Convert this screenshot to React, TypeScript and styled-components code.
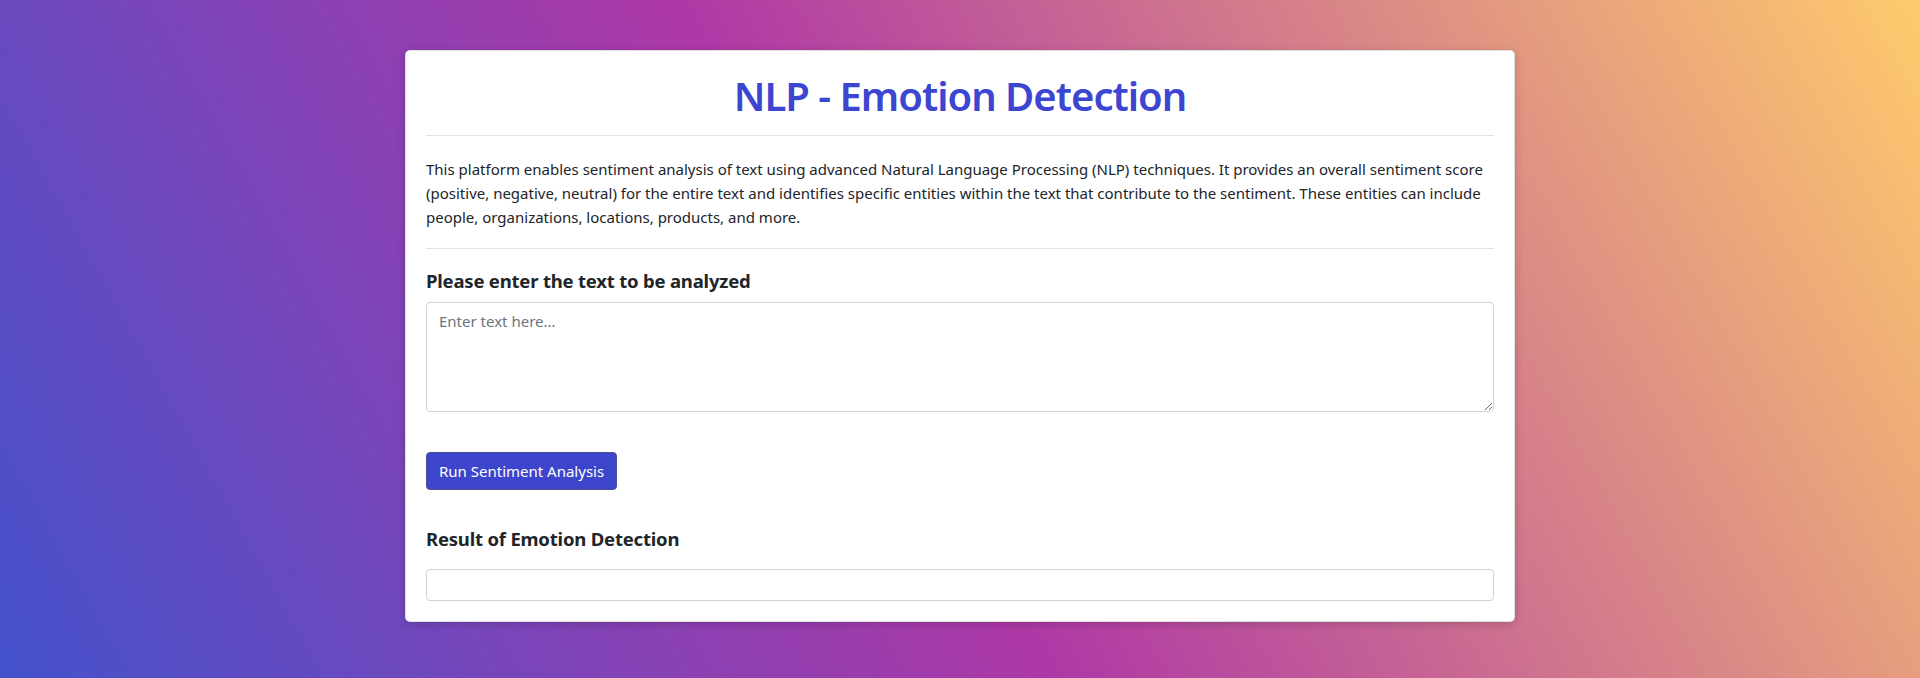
import React from "react";
import styled, { createGlobalStyle } from "styled-components";

const GlobalStyle = createGlobalStyle`
  * { box-sizing: border-box; }
  html, body { margin: 0; padding: 0; }
  body {
    font-family: "Noto Sans", "Open Sans", sans-serif;
    color: #212529;
    min-height: 678px;
    background: linear-gradient(61deg, #4452cc 0%, #ae38a6 46%, #ffcb6c 100%);
  }
`;

const Page = styled.div`
  min-height: 678px;
  padding-top: 50px;
  display: flex;
  justify-content: center;
  align-items: flex-start;
`;

const Card = styled.main`
  width: 1110px;
  background: #ffffff;
  border: 1px solid rgba(0, 0, 0, 0.12);
  border-radius: 5px;
  box-shadow: 0 2px 8px rgba(0, 0, 0, 0.18);
  padding: 20px;
  display: flex;
  flex-direction: column;
`;

const Title = styled.h1`
  margin: 1px 0 0 0;
  font-size: 40px;
  line-height: 48px;
  font-weight: 600;
  letter-spacing: -1px;
  color: #3d46d0;
  text-align: center;
`;

const Rule = styled.hr<{ $top: number }>`
  margin: ${(p) => p.$top}px 0 0 0;
  border: 0;
  border-top: 1px solid #e2e3e6;
  height: 0;
`;

const Intro = styled.p`
  margin: 21px 0 0 0;
  font-size: 15px;
  line-height: 24px;
  letter-spacing: 0;
`;

const Heading = styled.h5<{ $top: number }>`
  margin: ${(p) => p.$top}px 0 0 0;
  font-size: 18.5px;
  line-height: 24px;
  font-weight: 700;
  letter-spacing: -0.2px;
  color: #212529;
`;

const TextArea = styled.textarea`
  margin-top: 9px;
  width: 100%;
  height: 110px;
  display: block;
  padding: 6px 12px;
  font-family: inherit;
  font-size: 15px;
  line-height: 24px;
  color: #212529;
  border: 1px solid #ced4da;
  border-radius: 4px;
  resize: vertical;
  outline: none;
  &::placeholder { color: #6c757d; }
`;

const Button = styled.button`
  margin-top: 40px;
  align-self: flex-start;
  height: 38px;
  padding: 0 12px;
  font-family: inherit;
  font-size: 15px;
  color: #ffffff;
  background: #3d45cc;
  border: 1px solid #4d5190;
  border-radius: 4px;
  cursor: pointer;
`;

const ResultBox = styled.div`
  margin-top: 18px;
  height: 32px;
  border: 1px solid #ced4da;
  border-radius: 4px;
`;

export default function App() {
  return (
    <>
      <GlobalStyle />
      <Page>
        <Card>
          <Title>NLP - Emotion Detection</Title>
          <Rule $top={15} />
          <Intro>
            This platform enables sentiment analysis of text using advanced Natural Language Processing (NLP)
            techniques. It provides an overall sentiment score (positive, negative, neutral) for the entire text and
            identifies specific entities within the text that contribute to the sentiment. These entities can include
            people, organizations, locations, products, and more.
          </Intro>
          <Rule $top={19} />
          <Heading $top={20}>Please enter the text to be analyzed</Heading>
          <TextArea placeholder="Enter text here..." />
          <Button>Run Sentiment Analysis</Button>
          <Heading $top={37}>Result of Emotion Detection</Heading>
          <ResultBox />
        </Card>
      </Page>
    </>
  );
}
